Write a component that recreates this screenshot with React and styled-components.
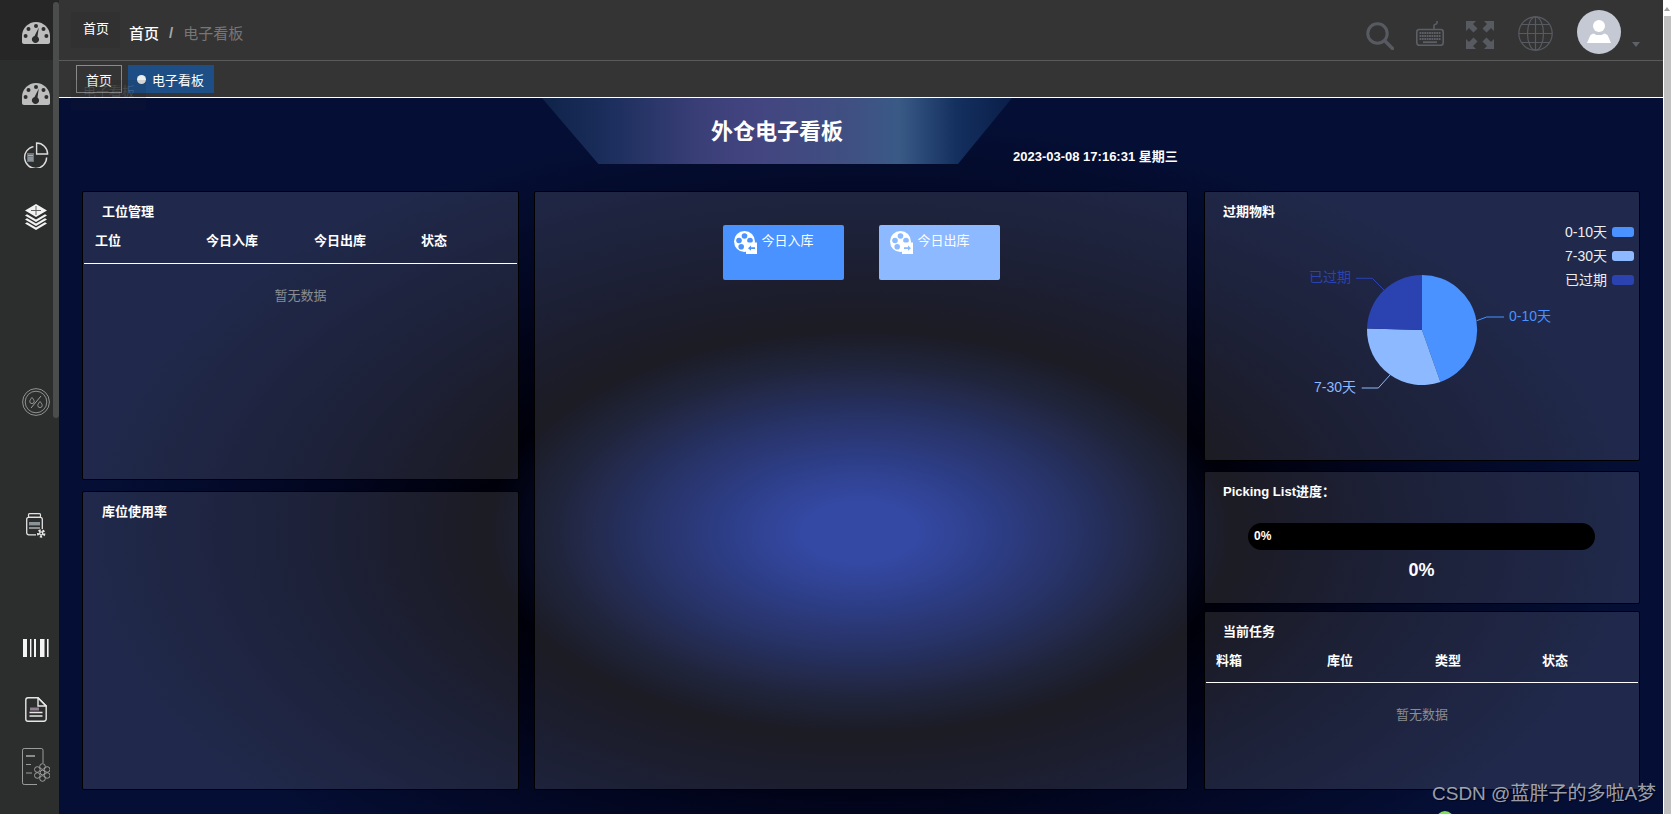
import React from 'react'
import styled, { createGlobalStyle } from 'styled-components'

const GlobalStyle = createGlobalStyle`
  html, body {
    margin: 0;
    padding: 0;
    height: 100%;
    overflow: hidden;
    background: #fff;
  }
  * { box-sizing: border-box; }
  body {
    font-family: "Liberation Sans", "Noto Sans CJK SC", sans-serif;
  }
`

const Page = styled.div`
  position: relative;
  display: flex;
  width: 1671px;
  height: 814px;
  overflow: hidden;
`

const Sidebar = styled.aside`
  position: relative;
  flex: 0 0 59px;
  display: flex;
  flex-direction: column;
  background: #2c2e2d;
`

const SideThumb = styled.div`
  position: absolute;
  top: 2px;
  left: 53px;
  width: 6px;
  height: 416px;
  border-radius: 3px;
  background: #4b4c4c;
`

const ActiveRow = styled.div`
  height: 60px;
  padding: 6px 0 0 13px;
  display: flex;
  align-items: center;
  justify-content: center;
  background: #252625;
`

const SideItem = styled.div`
  height: 40px;
  margin-top: ${(p) => p.$mt}px;
  padding-left: 13px;
  display: flex;
  align-items: center;
  justify-content: center;
`

const Main = styled.div`
  flex: 1;
  min-width: 0;
  display: flex;
  flex-direction: column;
`

const Header = styled.header`
  height: 61px;
  display: flex;
  align-items: center;
  padding: 4px 42px 0 70px;
  background: #343434;
  border-bottom: 1px solid #5a5a5a;
`

const Crumb = styled.span`
  font-size: 15px;
  font-weight: ${(p) => (p.$current ? 400 : 500)};
  color: ${(p) => (p.$current ? '#767676' : '#fff')};
`

const CrumbSep = styled.span`
  margin: 0 10px;
  font-size: 15px;
  font-weight: 700;
  color: #a8a8a8;
`

const HeaderTools = styled.div`
  margin-left: auto;
  display: flex;
  align-items: center;
`

const Tool = styled.div`
  display: flex;
  margin-top: ${(p) => p.$mt}px;
  margin-left: ${(p) => p.$ml}px;
`

const Avatar = styled.div`
  position: relative;
  width: 44px;
  height: 44px;
  margin-left: 24px;
  border-radius: 50%;
  background: #c4c9d3;
`

const Caret = styled.div`
  position: absolute;
  right: -19px;
  bottom: 7px;
  border-left: 4px solid transparent;
  border-right: 4px solid transparent;
  border-top: 5px solid #5d6168;
`

const TagBar = styled.div`
  height: 37px;
  display: flex;
  gap: 6px;
  padding: 4px 0 0 17px;
  background: #343434;
  border-bottom: 1px solid #fff;
`

const Tag = styled.div`
  height: 28px;
  display: flex;
  align-items: center;
  gap: 6px;
  padding: 0 ${(p) => (p.$active ? 10 : 9)}px 0 9px;
  font-size: 13px;
  color: #fff;
  background: ${(p) => (p.$active ? '#1d4f86' : 'transparent')};
  border: ${(p) => (p.$active ? 'none' : '1px solid #8a8a8a')};
`

const TagDot = styled.i`
  width: 9px;
  height: 9px;
  border-radius: 50%;
  background: #eee;
`

const Board = styled.main`
  flex: 1;
  padding: 0 23px;
  overflow: hidden;
  background: radial-gradient(
    ellipse 1134px 614px at 801px 434px,
    #1b3399 0%,
    #1b3399 5%,
    #142678 12%,
    #0c184e 20%,
    #050a24 27%,
    #00000a 33%,
    #020620 48%,
    #050f35 68%,
    #050f35 100%
  );
`

const BoardTop = styled.div`
  height: 93px;
  display: flex;
  align-items: flex-start;
  padding-left: 460px;
`

const Banner = styled.div`
  width: 470px;
  height: 66px;
  padding-bottom: 4px;
  display: flex;
  align-items: center;
  justify-content: center;
  clip-path: polygon(0 0, 100% 0, 88.5% 100%, 12% 100%);
  background: linear-gradient(
    90deg,
    #0f2349 0%,
    #1b2e5c 14%,
    #3b3f78 34%,
    #434580 46%,
    #3f5082 66%,
    #3a5a86 76%,
    #14305f 88%,
    #0a1e48 100%
  );
  font-size: 22px;
  font-weight: 700;
  color: #fff;
`

const DateText = styled.div`
  margin: 50px 0 0 1px;
  line-height: 18px;
  font-size: 13px;
  font-weight: 700;
  color: #fff;
  white-space: nowrap;
`

const Columns = styled.div`
  display: grid;
  grid-template-columns: 437px 654px 437px;
  column-gap: 15px;
  height: 599px;
`

const Column = styled.div`
  display: flex;
  flex-direction: column;
  padding-left: ${(p) => p.$pl || 0}px;
`

const Panel = styled.section`
  height: ${(p) => p.$h}px;
  margin-top: ${(p) => p.$mt || 0}px;
  border: 1px solid #000;
  border-radius: 2px;
  background: rgba(255, 255, 255, 0.11);
  overflow: hidden;
`

const PanelTitle = styled.h3`
  height: 40px;
  margin: 0;
  padding-left: ${(p) => p.$pl || 18}px;
  line-height: 40px;
  font-size: 13px;
  font-weight: 700;
  color: #fff;
`

const TableHead = styled.div`
  display: grid;
  grid-template-columns: 111px 108px 107px 1fr;
  height: ${(p) => p.$h}px;
  margin: 0 1px;
  padding-left: ${(p) => p.$pl}px;
  align-items: flex-start;
  border-bottom: 1px solid #fff;
`

const HeadCell = styled.div`
  line-height: 18px;
  font-size: 13px;
  font-weight: 700;
  color: #fff;
`

const Empty = styled.div`
  padding-top: 23px;
  line-height: 18px;
  text-align: center;
  font-size: 13px;
  color: #8a8c92;
`

const Cards = styled.div`
  display: flex;
  justify-content: center;
  gap: 35px;
  padding-top: 33px;
`

const Card = styled.div`
  width: 121px;
  height: 55px;
  display: flex;
  align-items: flex-start;
  gap: 5px;
  padding: 6px 0 0 11px;
  border-radius: 2px;
  background: ${(p) => p.$bg};
  font-size: 13px;
  line-height: 20px;
  color: #fff;
`

const ChartBox = styled.svg`
  display: block;
  margin-top: -10px;
`

const ProgressBox = styled.div`
  padding: 11px 44px 0 43px;
`

const Track = styled.div`
  height: 27px;
  padding-left: 6px;
  border-radius: 14px;
  background: #000;
  line-height: 27px;
  font-size: 12px;
  font-weight: 700;
  color: #fff;
`

const Percent = styled.div`
  margin-top: 9px;
  text-align: center;
  line-height: 22px;
  font-size: 18px;
  font-weight: 700;
  color: #fff;
`

const PageScroll = styled.div`
  flex: 0 0 8px;
  display: flex;
  flex-direction: column;
  align-items: flex-end;
  background: #fff;
`

const ScrollUp = styled.div`
  margin: 7px 1px 5px 0;
  border-left: 3px solid transparent;
  border-right: 3px solid transparent;
  border-bottom: 4px solid #a3a3a3;
`

const ScrollThumb = styled.div`
  flex: 1;
  width: 7px;
  background: #c1c1c1;
`

const GhostTab = styled.div`
  position: absolute;
  top: 12px;
  left: 71px;
  width: 49px;
  height: 36px;
  padding: 8px 0 0 12px;
  background: #313131;
  line-height: 18px;
  font-size: 13px;
  color: #fff;
`

const GhostTag = styled.div`
  position: absolute;
  top: 80px;
  left: 71px;
  width: 75px;
  height: 30px;
  padding: 3px 0 0 12px;
  background: rgba(30, 30, 40, 0.12);
  line-height: 18px;
  font-size: 13px;
  color: rgba(255, 255, 255, 0.13);
`

const Watermark = styled.div`
  position: absolute;
  top: 782px;
  left: 1432px;
  line-height: 24px;
  font-size: 19px;
  color: rgba(255, 255, 255, 0.62);
  text-shadow: 1px 1px 1px rgba(0, 0, 0, 0.5);
  white-space: nowrap;
`

const GreenDot = styled.div`
  position: absolute;
  top: 811px;
  left: 1436px;
  width: 18px;
  height: 18px;
  border-radius: 50%;
  background: #7fe05a;
`

function GaugeIcon() {
  return (
    <svg width="28" height="22" viewBox="0 0 28 22">
      <path d="M14 0C6.3 0 0 6.3 0 14v6c0 1.2.8 2 2 2h24c1.2 0 2-.8 2-2v-6C28 6.3 21.7 0 14 0z" fill="#bdbdbd" />
      <g fill="#2c2e2d">
        <circle cx="14" cy="4" r="2" />
        <circle cx="6.5" cy="7" r="2" />
        <circle cx="21.5" cy="7" r="2" />
        <circle cx="3.6" cy="14" r="2" />
        <circle cx="24.4" cy="14" r="2" />
        <path d="M16.8 5.5L15.5 14.4a3.6 3.6 0 1 1-3-.5z" />
      </g>
    </svg>
  )
}

function PieIcon() {
  return (
    <svg width="26" height="26" viewBox="0 0 26 26" fill="none">
      <path d="M10.5 4.6A11 11 0 1 0 23.6 15.5" stroke="#ddd" strokeWidth="1.4" />
      <path d="M13.6 1C19.6 1 24.6 6 24.6 12H13.6z" stroke="#ddd" strokeWidth="1.4" />
      <rect x="4" y="11" width="7" height="9" fill="#6f7478" />
      <path d="M5 13.5h5M5 16h5M5 18h5" stroke="#b4c2cc" strokeWidth="0.8" />
    </svg>
  )
}

function LayersIcon() {
  return (
    <svg width="22" height="26" viewBox="0 0 22 26">
      <path d="M11 0L22 6.5 11 13 0 6.5z" fill="#f2f2f2" />
      <path d="M11 2v9M6 6.5h10" stroke="#555" strokeWidth="0.9" />
      <path d="M2 10.2L11 15.6l9-5.4 2 1.3L11 18 0 11.5z" fill="#f2f2f2" />
      <path d="M2 14.2L11 19.6l9-5.4 2 1.3L11 22 0 15.5z" fill="#f2f2f2" />
      <path d="M2 18.2L11 23.6l9-5.4 2 1.3L11 26 0 19.5z" fill="#f2f2f2" />
    </svg>
  )
}

function RateIcon() {
  return (
    <svg width="28" height="28" viewBox="0 0 28 28" fill="none" stroke="#a9a9a9">
      <circle cx="14" cy="14" r="13.4" strokeWidth="0.8" />
      <circle cx="14" cy="14" r="10.8" strokeWidth="0.8" />
      <path d="M19 8L9 20" strokeWidth="0.9" />
      <path d="M10 9.5c1.6 2 2.2 3 2.2 3.9a2.2 2.2 0 0 1-4.4 0c0-.9.6-1.9 2.2-3.9zM18 13.5c1.6 2 2.2 3 2.2 3.9a2.2 2.2 0 0 1-4.4 0c0-.9.6-1.9 2.2-3.9z" strokeWidth="0.8" />
    </svg>
  )
}

function GearGlyph({ x, y, r, color = '#e6e6e6', width = 1.3 }) {
  return (
    <g transform={`translate(${x} ${y})`} stroke={color} fill="none" strokeWidth={width}>
      <circle r={r * 0.38} />
      <circle r={r * 0.78} strokeDasharray={`${r * 0.55} ${r * 0.42}`} strokeWidth={width * 1.7} />
    </g>
  )
}

function StockIcon() {
  return (
    <svg width="20" height="25" viewBox="0 0 20 25" fill="none">
      <rect x="2.5" y="0.7" width="12" height="3.6" rx="1" stroke="#e2e2e2" strokeWidth="1.2" />
      <rect x="0.7" y="4.3" width="15.6" height="17.5" rx="2" stroke="#e2e2e2" strokeWidth="1.3" />
      <rect x="3" y="9" width="11" height="3.4" fill="#8a929a" />
      <path d="M3 15h11" stroke="#cfcfcf" strokeWidth="1.2" />
      <rect x="10" y="16" width="10" height="9" fill="#2c2e2d" />
      <GearGlyph x={15.2} y={20.4} r={4} />
    </svg>
  )
}

function BarcodeIcon() {
  return (
    <svg width="26" height="18" viewBox="0 0 26 18" fill="#f4f4f4">
      <rect x="0" y="0" width="4" height="18" />
      <rect x="7" y="0" width="1.4" height="18" />
      <rect x="11" y="0" width="2" height="18" />
      <rect x="17" y="0" width="4.5" height="18" />
      <rect x="24" y="0" width="1.6" height="18" />
    </svg>
  )
}

function DocIcon() {
  return (
    <svg width="22" height="25" viewBox="0 0 22 25" fill="none" stroke="#e6e6e6" strokeWidth="1.4">
      <path d="M13 .8H3A2.2 2.2 0 0 0 .8 3v19A2.2 2.2 0 0 0 3 24.2h16a2.2 2.2 0 0 0 2.2-2.2V9z" />
      <path d="M13 .8l8.2 8.2H13z" />
      <rect x="5" y="10.5" width="9" height="3" fill="#8f7f8f" stroke="none" />
      <path d="M4.5 15.5h13M4.5 19h13" />
    </svg>
  )
}

function DocGearIcon() {
  return (
    <svg width="28" height="37" viewBox="0 0 28 37" fill="none" stroke="#a8a8a8" strokeWidth="0.9">
      <path d="M21 15V2.2A1.7 1.7 0 0 0 19.3.5H2.2A1.7 1.7 0 0 0 .5 2.2v32.600A1.7 1.7 0 0 0 2.200 36.500H15" />
      <path d="M4 8h9" stroke="#8b8b8b" strokeWidth="2" />
      <path d="M4 16.500h5M4 25h6" />
      <circle cx="20.500" cy="24.500" r="2.300" />
      <circle cx="20.500" cy="18.500" r="2.800" />
      <circle cx="20.500" cy="30.500" r="2.800" />
      <circle cx="15.300" cy="21.500" r="2.800" />
      <circle cx="25.200" cy="21.500" r="2.800" />
      <circle cx="15.300" cy="27.500" r="2.800" />
      <circle cx="25.200" cy="27.500" r="2.800" />
    </svg>
  )
}

function SearchIcon() {
  return (
    <svg width="28" height="28" viewBox="0 0 28 28" fill="none" stroke="#575b61">
      <circle cx="11.500" cy="11.500" r="9.700" strokeWidth="3" />
      <path d="M18.500 18.500L26.500 26.500" strokeWidth="3.400" strokeLinecap="round" />
    </svg>
  )
}

function KeyboardIcon() {
  return (
    <svg width="28" height="25" viewBox="0 0 28 25" fill="none" stroke="#5c6066">
      <path d="M18 8v-3.500c0-1.500 3-1 3-2.500V0" strokeWidth="1.500" />
      <rect x="0.800" y="8.500" width="26.400" height="15.800" rx="2.500" strokeWidth="1.600" />
      <path d="M3.500 12h21M3.500 15h21M3.500 18h21" strokeWidth="2" strokeDasharray="1.800 0.600" />
      <path d="M7 21.200h14" strokeWidth="1.800" />
    </svg>
  )
}

function FullscreenIcon() {
  return (
    <svg width="28" height="28" viewBox="0 0 28 28" fill="#575b61">
      <path d="M0 0h10L7 3l4.500 4.500-4 4L3 7l-3 3z" />
      <path d="M28 0H18l3 3-4.500 4.500 4 4L25 7l3 3z" />
      <path d="M0 28h10l-3-3 4.500-4.500-4-4L3 21l-3-3z" />
      <path d="M28 28H18l3-3-4.500-4.500 4-4L25 21l3-3z" />
    </svg>
  )
}

function GlobeIcon() {
  return (
    <svg width="35" height="35" viewBox="0 0 35 35" fill="none" stroke="#575b61" strokeWidth="1.200">
      <circle cx="17.500" cy="17.500" r="16.700" />
      <ellipse cx="17.500" cy="17.500" rx="8" ry="16.700" />
      <path d="M17.500 0.800v33.400M0.800 17.500h33.400M3.500 8.500h28M3.500 26.500h28" />
    </svg>
  )
}

function ReelIcon({ hole, arrow }) {
  return (
    <svg width="23" height="23" viewBox="0 0 23 23" style={{ flex: 'none' }}>
      <circle cx="10.500" cy="10.500" r="10.500" fill="#fff" />
      <g fill={hole}>
        <circle cx="10.500" cy="5" r="2.800" />
        <circle cx="5" cy="9.500" r="2.800" />
        <circle cx="16" cy="9.500" r="2.800" />
        <circle cx="7.200" cy="15.800" r="2.800" />
      </g>
      <rect x="12" y="11.500" width="11" height="11.500" fill="#fff" />
      <path d={arrow === 'in' ? 'M14 17.200l3-2.600v1.700h4v1.800h-4v1.700z' : 'M21 17.200l-3-2.600v1.700h-4v1.800h4v1.700z'} fill={hole} />
    </svg>
  )
}

function ExpiryChart() {
  return (
    <ChartBox width="434" height="235" viewBox="0 0 434 235" fontSize="14">
      <path d="M217 108L217 53A55 55 0 0 1 235.400 159.900Z" fill="#4992ff" />
      <path d="M217 108L235.400 159.900A55 55 0 0 1 162 106.600Z" fill="#8cb9ff" />
      <path d="M217 108L162 106.600A55 55 0 0 1 217 53Z" fill="#2a43b0" />
      <g fill="none" strokeWidth="1">
        <path d="M271.700 98.700L281.700 95H299" stroke="#4992ff" />
        <path d="M185 153L173.300 166H156.700" stroke="#8cb9ff" />
        <path d="M179 68L167.300 56.300H151" stroke="#2a43b0" />
      </g>
      <text x="304" y="99" fill="#4992ff">0-10天</text>
      <text x="151" y="170" fill="#8cb9ff" textAnchor="end">7-30天</text>
      <text x="146" y="60" fill="#2a43b0" textAnchor="end">已过期</text>
      {[
        ['0-10天', 10, '#4992ff'],
        ['7-30天', 34, '#8cb9ff'],
        ['已过期', 58, '#2a43b0'],
      ].map(([label, y, color]) => (
        <g key={label}>
          <text x="402" y={y + 5} fill="#eee" textAnchor="end">{label}</text>
          <rect x="407" y={y - 5} width="22" height="10" rx="3" fill={color} />
        </g>
      ))}
    </ChartBox>
  )
}

function DataTable({ columns, headHeight, pad }) {
  return (
    <>
      <TableHead $h={headHeight} $pl={pad}>
        {columns.map((c) => (
          <HeadCell key={c}>{c}</HeadCell>
        ))}
      </TableHead>
      <Empty>暂无数据</Empty>
    </>
  )
}

export default function App() {
  return (
    <Page>
      <GlobalStyle />
      <Sidebar>
        <ActiveRow><GaugeIcon /></ActiveRow>
        <SideItem $mt={14}><GaugeIcon /></SideItem>
        <SideItem $mt={21}><PieIcon /></SideItem>
        <SideItem $mt={22}><LayersIcon /></SideItem>
        <SideItem $mt={145}><RateIcon /></SideItem>
        <SideItem $mt={83}><StockIcon /></SideItem>
        <SideItem $mt={83}><BarcodeIcon /></SideItem>
        <SideItem $mt={21}><DocIcon /></SideItem>
        <SideItem $mt={17}><DocGearIcon /></SideItem>
        <SideThumb />
      </Sidebar>
      <Main>
        <Header>
          <Crumb>首页</Crumb>
          <CrumbSep>/</CrumbSep>
          <Crumb $current>电子看板</Crumb>
          <HeaderTools>
            <Tool $mt={7} $ml={0}><SearchIcon /></Tool>
            <Tool $mt={2} $ml={22}><KeyboardIcon /></Tool>
            <Tool $mt={5} $ml={22}><FullscreenIcon /></Tool>
            <Tool $mt={2} $ml={24}><GlobeIcon /></Tool>
            <Avatar>
              <svg width="44" height="44" viewBox="0 0 44 44" fill="#fff">
                <circle cx="22" cy="16" r="6" />
                <path d="M10 33l3-7c.6-1.400 2-2 3.500-2.500l3 1.500h5l3-1.500c1.500.5 2.900 1.100 3.500 2.500l3 7z" />
              </svg>
              <Caret />
            </Avatar>
          </HeaderTools>
        </Header>
        <TagBar>
          <Tag>首页</Tag>
          <Tag $active><TagDot />电子看板</Tag>
        </TagBar>
        <Board>
          <BoardTop>
            <Banner>外仓电子看板</Banner>
            <DateText>2023-03-08 17:16:31 星期三</DateText>
          </BoardTop>
          <Columns>
            <Column>
              <Panel $h={289}>
                <PanelTitle $pl={19}>工位管理</PanelTitle>
                <DataTable columns={['工位', '今日入库', '今日出库', '状态']} headHeight={32} pad={11} />
              </Panel>
              <Panel $h={299} $mt={11}>
                <PanelTitle $pl={19}>库位使用率</PanelTitle>
              </Panel>
            </Column>
            <Panel $h={599}>
              <Cards>
                <Card $bg="#4992ff"><ReelIcon hole="#4992ff" arrow="in" />今日入库</Card>
                <Card $bg="#8cb9ff"><ReelIcon hole="#8cb9ff" arrow="out" />今日出库</Card>
              </Cards>
            </Panel>
            <Column $pl={1}>
              <Panel $h={270}>
                <PanelTitle>过期物料</PanelTitle>
                <ExpiryChart />
              </Panel>
              <Panel $h={133} $mt={10}>
                <PanelTitle>Picking List进度：</PanelTitle>
                <ProgressBox>
                  <Track>0%</Track>
                  <Percent>0%</Percent>
                </ProgressBox>
              </Panel>
              <Panel $h={179} $mt={7}>
                <PanelTitle>当前任务</PanelTitle>
                <DataTable columns={['料箱', '库位', '类型', '状态']} headHeight={31} pad={10} />
              </Panel>
            </Column>
          </Columns>
        </Board>
      </Main>
      <PageScroll>
        <ScrollUp />
        <ScrollThumb />
      </PageScroll>
      <GhostTab>首页</GhostTab>
      <GhostTag>电子看板</GhostTag>
      <Watermark>CSDN @蓝胖子的多啦A梦</Watermark>
      <GreenDot />
    </Page>
  )
}
